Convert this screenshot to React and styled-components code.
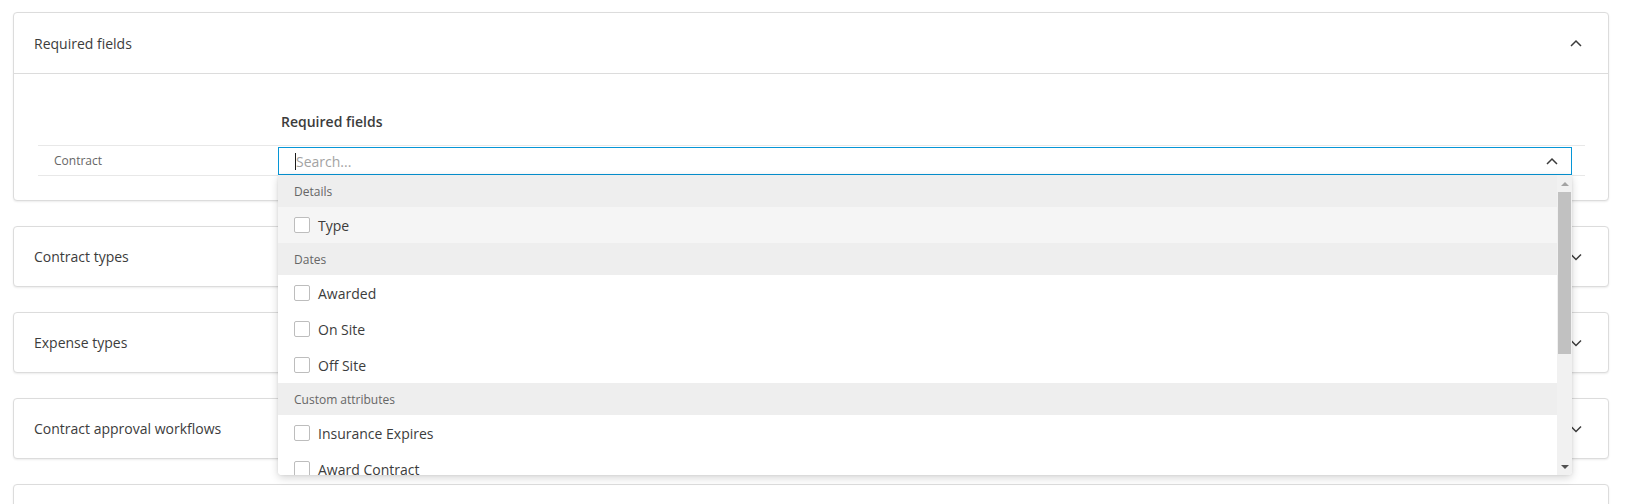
import React from "react";
import styled, { createGlobalStyle } from "styled-components";

const GlobalStyle = createGlobalStyle`
  html, body {
    margin: 0;
    padding: 0;
    background: #fff;
    overflow: hidden;
  }
  body {
    font-family: "Open Sans", "Liberation Sans", sans-serif;
    color: #3c3c3c;
  }
  * { box-sizing: border-box; }
`;

function Chevron({ up }) {
  return (
    <svg width="12" height="8" viewBox="0 0 12 8" fill="none">
      <path
        d={up ? "M1 7 L6 2 L11 7" : "M1 1.5 L6 6.5 L11 1.5"}
        stroke="#3c3c3c"
        strokeWidth="1.5"
      />
    </svg>
  );
}

const groups = [
  { label: "Details", items: ["Type"] },
  { label: "Dates", items: ["Awarded", "On Site", "Off Site"] },
  { label: "Custom attributes", items: ["Insurance Expires", "Award Contract"] },
];

function FieldSelect() {
  return (
    <SelectWrap>
      <SearchBox>
        <Caret />
        <Placeholder>Search...</Placeholder>
        <Chevron up />
      </SearchBox>
      <Menu>
        <MenuList>
          {groups.map((g) => (
            <React.Fragment key={g.label}>
              <GroupLabel>{g.label}</GroupLabel>
              {g.items.map((it) => (
                <Option key={it} $hover={it === "Type"}>
                  <Check />
                  {it}
                </Option>
              ))}
            </React.Fragment>
          ))}
        </MenuList>
        <ScrollTrack>
          <ScrollBtn>
            <Arrow $up />
          </ScrollBtn>
          <Thumb />
          <ScrollSpacer />
          <ScrollBtn>
            <Arrow />
          </ScrollBtn>
        </ScrollTrack>
      </Menu>
    </SelectWrap>
  );
}

export default function App() {
  const collapsed = ["Contract types", "Expense types", "Contract approval workflows"];
  return (
    <>
      <GlobalStyle />
      <Page>
        <Card>
          <CardHeader $open>
            <span>Required fields</span>
            <Chevron up />
          </CardHeader>
          <CardBody>
            <FieldTable>
              <HeadCell />
              <ColumnTitle>Required fields</ColumnTitle>
              <RowCell>
                <RowLabel>Contract</RowLabel>
              </RowCell>
              <RowCell $input>
                <FieldSelect />
              </RowCell>
            </FieldTable>
          </CardBody>
        </Card>
        {collapsed.map((t) => (
          <Card key={t}>
            <CardHeader>
              <span>{t}</span>
              <Chevron />
            </CardHeader>
          </Card>
        ))}
        <Card>
          <CardHeader />
        </Card>
      </Page>
    </>
  );
}

const Page = styled.div`
  padding: 12px 16px 0 13px;
  display: flex;
  flex-direction: column;
  gap: 25px;
`;

const Card = styled.section`
  background: #fff;
  border: 1px solid #dcdcdc;
  border-radius: 4px;
  box-shadow: 0 1px 2px rgba(0, 0, 0, 0.08);
`;

const CardHeader = styled.div`
  height: ${({ $open }) => ($open ? "61px" : "59px")};
  display: flex;
  align-items: center;
  justify-content: space-between;
  padding: 0 26px 0 20px;
  font-size: 14px;
  color: #3c3c3c;
  border-bottom: ${({ $open }) => ($open ? "1px solid #dcdcdc" : "none")};
`;

const CardBody = styled.div`
  padding: 24px 23px 24px 24px;
`;

const FieldTable = styled.div`
  display: grid;
  grid-template-columns: 240px 1fr;
`;

const HeadCell = styled.div`
  height: 47px;
`;

const ColumnTitle = styled.div`
  height: 47px;
  display: flex;
  align-items: center;
  padding-left: 3px;
  font-size: 14px;
  font-weight: 600;
  color: #3c3c3c;
`;

const RowCell = styled.div`
  height: 31px;
  border-top: 1px solid #e8e8e8;
  border-bottom: 1px solid #e8e8e8;
  display: flex;
  align-items: ${({ $input }) => ($input ? "flex-start" : "center")};
  padding: ${({ $input }) => ($input ? "1px 13px 0 0" : "0 0 0 16px")};
`;

const RowLabel = styled.span`
  font-size: 12px;
  color: #666;
`;

const SelectWrap = styled.div`
  position: relative;
  width: 100%;
`;

const SearchBox = styled.div`
  height: 28px;
  border: 1px solid #0696d7;
  display: flex;
  align-items: center;
  padding: 0 13px 0 16px;
  background: #fff;
`;

const Caret = styled.span`
  width: 1px;
  height: 17px;
  background: #1a1a1a;
`;

const Placeholder = styled.span`
  flex: 1;
  font-size: 14px;
  color: #a3a3a3;
`;

const Menu = styled.div`
  position: absolute;
  top: 100%;
  left: 0;
  right: 0;
  height: 300px;
  display: flex;
  background: #fff;
  border-radius: 0 0 4px 4px;
  overflow: hidden;
  box-shadow: 0 3px 8px rgba(0, 0, 0, 0.16), 0 0 3px rgba(0, 0, 0, 0.08);
  z-index: 10;
`;

const MenuList = styled.div`
  flex: 1;
  overflow: hidden;
`;

const GroupLabel = styled.div`
  height: 32px;
  display: flex;
  align-items: center;
  padding-left: 16px;
  background: #eeeeee;
  font-size: 12px;
  color: #666;
`;

const Option = styled.div`
  height: 36px;
  display: flex;
  align-items: center;
  gap: 8px;
  padding-left: 16px;
  font-size: 14px;
  color: #3c3c3c;
  background: ${({ $hover }) => ($hover ? "#f5f5f5" : "#fff")};
`;

const Check = styled.span`
  width: 16px;
  height: 16px;
  border: 1px solid #bdbdbd;
  border-radius: 2px;
  background: #fff;
`;

const ScrollTrack = styled.div`
  width: 15px;
  background: #f1f1f1;
  display: flex;
  flex-direction: column;
  align-items: center;
`;

const ScrollBtn = styled.div`
  height: 17px;
  width: 100%;
  display: flex;
  align-items: center;
  justify-content: center;
`;

const Arrow = styled.span`
  width: 0;
  height: 0;
  border-left: 4px solid transparent;
  border-right: 4px solid transparent;
  ${({ $up }) =>
    $up ? "border-bottom: 4px solid #a3a3a3;" : "border-top: 4px solid #505050;"}
`;

const Thumb = styled.div`
  width: 13px;
  height: 162px;
  background: #c1c1c1;
`;

const ScrollSpacer = styled.div`
  flex: 1;
`;
